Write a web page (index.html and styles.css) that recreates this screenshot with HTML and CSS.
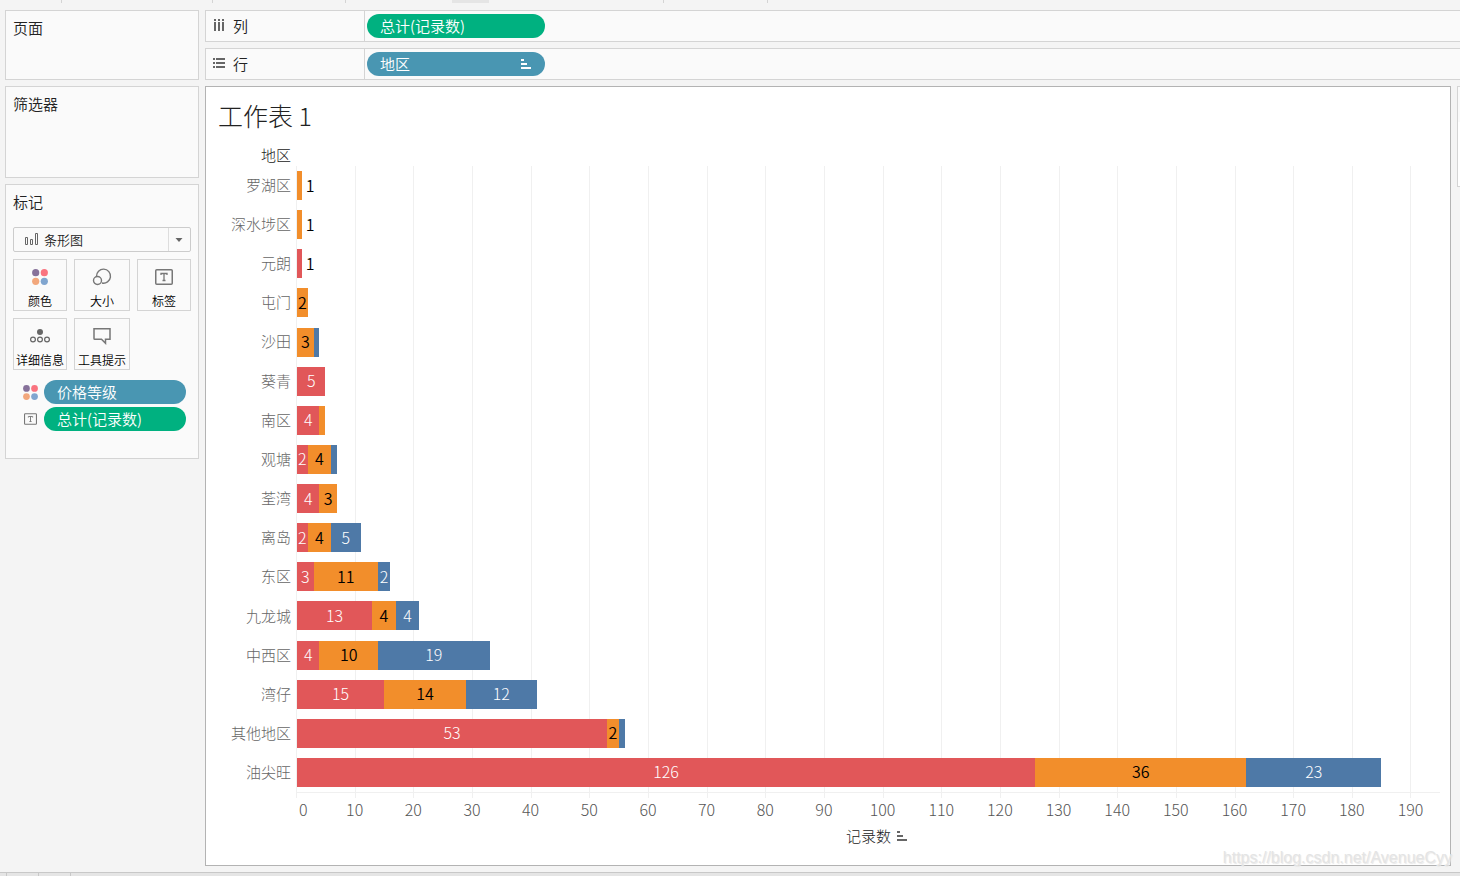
FILE: index.html
```html
<!DOCTYPE html>
<html lang="zh-CN">
<head>
<meta charset="utf-8">
<meta name="viewport" content="width=device-width, initial-scale=1">
<title>工作表 1</title>
<link rel="stylesheet" href="styles.css">
</head>
<body>
<svg class="defs" width="0" height="0" aria-hidden="true">
  <symbol id="sort" viewBox="0 0 10 10"><path d="M0 0h3v2H0zM0 4h6v2H0zM0 8h10v2H0z" fill="currentColor"/></symbol>
  <symbol id="dots" viewBox="0 0 16 16"><circle cx="3.700" cy="3.700" r="3.600" fill="#86719a"/><circle cx="12.300" cy="3.700" r="3.600" fill="#f9737f"/><circle cx="3.700" cy="12.300" r="3.600" fill="#f2a77c"/><circle cx="12.300" cy="12.300" r="3.600" fill="#80a5cf"/></symbol>
  <symbol id="text" viewBox="0 0 18 16"><rect x=".75" y=".75" width="16.500" height="14.500" rx="1" fill="none" stroke="#777" stroke-width="1.500"/><path d="M6 6V4.500h6V6M9 4.500v7M7.500 11.500h3" fill="none" stroke="#777" stroke-width="1.300"/></symbol>
</svg>
<div class="toolbar-edge"><i class="w1"></i><i class="w2"></i><i class="w3"></i><b></b><i class="w4"></i><i class="w5"></i></div>
<main class="workspace">
  <aside class="cards">
    <section class="card pages"><h2>页面</h2></section>
    <section class="card filters"><h2>筛选器</h2></section>
    <section class="card marks">
      <h2>标记</h2>
      <div class="mark-type">
        <select aria-label="标记类型"><option>条形图</option></select>
        <svg class="type-icon" width="14" height="13" viewBox="0 0 14 13" fill="none" stroke="#666"><path d="M.5 4.500h2v7h-2zM5.500 6.500h2v5h-2zM10.500 .5h2v11h-2z"/></svg>
        <svg class="arrow" width="22" height="23" viewBox="0 0 22 23"><path d="M.5 0v23" stroke="#ddd"/><path d="M7.500 10h7l-3.500 4z" fill="#666"/></svg>
      </div>
      <div class="mark-buttons">
        <button type="button"><svg width="16" height="18"><use href="#dots"/></svg>颜色</button>
        <button type="button"><svg width="20" height="18" viewBox="0 0 20 18" fill="none" stroke="#777" stroke-width="1.400"><path d="M4.500 8.500A7 7 0 1 1 10 15"/><circle cx="5.500" cy="12.500" r="4"/></svg>大小</button>
        <button type="button"><svg width="18" height="18"><use href="#text"/></svg>标签</button>
        <button type="button"><svg width="20" height="18" viewBox="0 0 20 18" fill="none" stroke="#666" stroke-width="1.200"><circle cx="10" cy="5" r="3" fill="#666" stroke="none"/><circle cx="3" cy="12.500" r="2.400"/><circle cx="10" cy="12.500" r="2.400"/><circle cx="17" cy="12.500" r="2.400"/></svg>详细信息</button>
        <button type="button"><svg width="20" height="18" viewBox="0 0 20 18" fill="none" stroke="#777" stroke-width="1.500"><path d="M2 1.750h16v10.500h-4.500v4l-4-4H2.750a.75 .75 0 0 1-.75-.75z"/></svg>工具提示</button>
      </div>
      <div class="encodings">
        <svg width="15" height="15"><use href="#dots"/></svg><button type="button" class="pill blue">价格等级</button>
        <svg width="13" height="12"><use href="#text"/></svg><button type="button" class="pill green">总计(记录数)</button>
      </div>
    </section>
  </aside>
  <div class="view">
    <section class="shelf">
      <h2><svg width="12" height="14" viewBox="0 0 12 14"><path d="M1 0h2v2H1zM5 0h2v2H5zM9 0h2v2H9zM1 3h2v9H1zM5 3h2v9H5zM9 3h2v9H9z" fill="#666"/></svg>列</h2>
      <button type="button" class="pill green">总计(记录数)</button>
    </section>
    <section class="shelf">
      <h2><svg width="12" height="14" viewBox="0 0 12 14"><path d="M0 1h2v2H0zM3 1h9v2H3zM0 5h2v2H0zM3 5h9v2H3zM0 9h2v2H0zM3 9h9v2H3z" fill="#666"/></svg>行</h2>
      <button type="button" class="pill blue">地区<svg width="10" height="10"><use href="#sort"/></svg></button>
    </section>
    <div class="stage">
      <section class="sheet">
        <h1>工作表 1</h1>
        <div class="chart">
          <div class="field">地区</div>
          <div class="names">
            <span>罗湖区</span><span>深水埗区</span><span>元朗</span><span>屯门</span><span>沙田</span><span>葵青</span><span>南区</span><span>观塘</span><span>荃湾</span><span>离岛</span><span>东区</span><span>九龙城</span><span>中西区</span><span>湾仔</span><span>其他地区</span><span>油尖旺</span>
          </div>
          <div class="gridlines"><i></i><i></i><i></i><i></i><i></i><i></i><i></i><i></i><i></i><i></i><i></i><i></i><i></i><i></i><i></i><i></i><i></i><i></i><i></i><i></i></div>
          <div class="bars">
            <div class="bar"><span class="mid" style="--v:1"></span><em>1</em></div>
            <div class="bar"><span class="mid" style="--v:1"></span><em>1</em></div>
            <div class="bar"><span class="low" style="--v:1"></span><em>1</em></div>
            <div class="bar"><span class="mid" style="--v:2">2</span></div>
            <div class="bar"><span class="mid" style="--v:3">3</span><span class="high" style="--v:1"></span></div>
            <div class="bar"><span class="low" style="--v:5">5</span></div>
            <div class="bar"><span class="low" style="--v:4">4</span><span class="mid" style="--v:1"></span></div>
            <div class="bar"><span class="low" style="--v:2">2</span><span class="mid" style="--v:4">4</span><span class="high" style="--v:1"></span></div>
            <div class="bar"><span class="low" style="--v:4">4</span><span class="mid" style="--v:3">3</span></div>
            <div class="bar"><span class="low" style="--v:2">2</span><span class="mid" style="--v:4">4</span><span class="high" style="--v:5">5</span></div>
            <div class="bar"><span class="low" style="--v:3">3</span><span class="mid" style="--v:11">11</span><span class="high" style="--v:2">2</span></div>
            <div class="bar"><span class="low" style="--v:13">13</span><span class="mid" style="--v:4">4</span><span class="high" style="--v:4">4</span></div>
            <div class="bar"><span class="low" style="--v:4">4</span><span class="mid" style="--v:10">10</span><span class="high" style="--v:19">19</span></div>
            <div class="bar"><span class="low" style="--v:15">15</span><span class="mid" style="--v:14">14</span><span class="high" style="--v:12">12</span></div>
            <div class="bar"><span class="low" style="--v:53">53</span><span class="mid" style="--v:2">2</span><span class="high" style="--v:1"></span></div>
            <div class="bar"><span class="low" style="--v:126">126</span><span class="mid" style="--v:36">36</span><span class="high" style="--v:23">23</span></div>
          </div>
          <div class="axis">
            <span>0</span><span>10</span><span>20</span><span>30</span><span>40</span><span>50</span><span>60</span><span>70</span><span>80</span><span>90</span><span>100</span><span>110</span><span>120</span><span>130</span><span>140</span><span>150</span><span>160</span><span>170</span><span>180</span><span>190</span>
          </div>
          <div class="axis-title">记录数<svg width="10" height="10"><use href="#sort"/></svg></div>
        </div>
        <div class="watermark">https://blog.csdn.net/AvenueCyy</div>
      </section>
      <aside class="legend"></aside>
    </div>
  </div>
</main>
<footer class="tabs-edge"><i></i><i></i><i></i></footer>
</body>
</html>
```
FILE: styles.css
```css
* { box-sizing: border-box; }

body {
  margin: 0;
  min-height: 100vh;
  display: flex;
  flex-direction: column;
  overflow-x: hidden;
  background: #f4f4f4;
  color: #222;
  font: 350 15px/24px "Noto Sans CJK SC", sans-serif;
}

h1, h2 { margin: 0; font-weight: 350; }
h2 { font-size: 15px; }
svg { display: block; flex: none; }
.defs { position: absolute; }
button { font: inherit; cursor: pointer; }

/* Edges of the toolbar above and the tab strip below */
.toolbar-edge { display: flex; height: 3px; }
.toolbar-edge i { border-right: 1px solid #d4d4d4; }
.toolbar-edge b { width: 37px; margin-left: 106px; background: #e5e5e5; }
.w1 { width: 62px; }
.w2 { width: 151px; }
.w3 { width: 133px; }
.w4 { width: 175px; }
.w5 { width: 104px; }
.tabs-edge {
  display: flex;
  height: 4px;
  padding-left: 6px;
  gap: 31px;
  background: #e5e5e5;
  border-top: 1px solid #c8c8c8;
}
.tabs-edge i { width: 1px; background: #c8c8c8; }

.workspace {
  flex: 1;
  display: grid;
  grid-template-columns: 194px minmax(0, 1fr);
  gap: 6px;
  padding: 7px 0 6px 5px;
}

/* Cards */
.cards { display: flex; flex-direction: column; gap: 6px; }
.card {
  padding: 5px 7px;
  background: #fafafa;
  border: 1px solid #d4d4d4;
}
.pages { min-height: 70px; }
.filters { min-height: 92px; }
.marks { padding-bottom: 27px; }

.mark-type {
  display: grid;
  grid-template-columns: 10px auto 1fr auto;
  align-items: center;
  height: 25px;
  margin-top: 13px;
  border: 1px solid #ccc;
  border-radius: 2px;
}
.mark-type select {
  grid-area: 1 / 1 / 2 / 5;
  width: 100%;
  height: 23px;
  padding: 0 30px;
  appearance: none;
  background: none;
  border: 0;
  color: #222;
  font: 350 13px/23px "Noto Sans CJK SC", sans-serif;
}
.type-icon { grid-area: 1 / 2; margin-left: 1px; pointer-events: none; }
.arrow { grid-area: 1 / 4; pointer-events: none; }

.mark-buttons {
  display: grid;
  grid-template-columns: 54fr 56fr 54fr;
  gap: 7px;
  margin-top: 7px;
}
.mark-buttons button {
  display: flex;
  flex-direction: column;
  align-items: center;
  gap: 5px;
  height: 52px;
  padding: 8px 0 0;
  background: #fafafa;
  border: 1px solid #d4d4d4;
  color: #000;
  font-size: 12px;
  line-height: 20px;
  white-space: nowrap;
}

.encodings {
  display: grid;
  grid-template-columns: 31px 142px;
  align-items: center;
  gap: 3px 0;
  margin-top: 10px;
}
.encodings svg { justify-self: center; margin-left: 4px; }
.encodings .pill { width: 100%; }

.pill {
  display: flex;
  align-items: center;
  justify-content: space-between;
  width: 178px;
  height: 24px;
  padding: 0 14px 0 13px;
  border: 0;
  border-radius: 12px;
  color: #fff;
  text-align: left;
}
.green { background: #00b180; }
.blue { background: #4996b2; }

/* Shelves */
.view { display: flex; flex-direction: column; gap: 6px; }
.shelf {
  display: flex;
  align-items: center;
  gap: 2px;
  height: 32px;
  background: #fafafa;
  border: 1px solid #d4d4d4;
  border-right: 0;
}
.shelf h2 {
  display: flex;
  align-items: center;
  gap: 8px;
  width: 159px;
  height: 30px;
  padding-left: 7px;
  border-right: 1px solid #d4d4d4;
}

.stage { flex: 1; display: flex; gap: 6px; }
.legend {
  width: 3px;
  height: 101px;
  border: solid #d4d4d4;
  border-width: 1px 0 1px 1px;
  background: linear-gradient(#fafafa 35px, #fff 35px);
}

/* Worksheet */
.sheet {
  position: relative;
  flex: 1;
  display: flex;
  flex-direction: column;
  padding: 12px 10px 17px 12px;
  background: #fff;
  border: 1px solid #b3b3b3;
}
h1 { font-size: 25px; line-height: 32px; font-weight: 300; }

.chart {
  flex: 1;
  display: grid;
  grid-template-columns: 78px minmax(0, 1fr);
  grid-template-rows: 22px 1fr auto auto;
  margin-top: 13px;
  font-weight: 300;
}
.field { grid-area: 1 / 1; padding-right: 5px; line-height: 22px; text-align: right; }
.names { grid-area: 2 / 1; display: grid; grid-auto-rows: 1fr; padding-right: 5px; color: #666; }
.names span { display: flex; align-items: center; justify-content: flex-end; padding-bottom: 2px; }

.gridlines {
  grid-area: 2 / 2;
  display: flex;
  margin-bottom: -5px;
}
.gridlines i { width: calc(10 / 195 * 100%); border-left: 1px solid #f0f0f0; }
.gridlines i:last-child { width: calc(5 / 195 * 100%); }

.bars {
  grid-area: 2 / 2;
  display: grid;
  grid-auto-rows: 1fr;
  border-bottom: 1px solid #f0f0f0;
  color: #fff;
  font-size: 16px;
}
.bar { display: flex; align-items: center; min-width: 0; }
.bar span {
  display: flex;
  align-items: center;
  justify-content: center;
  width: calc(var(--v) / 195 * 100%);
  height: 29px;
  padding-bottom: 2px;
}
.bar span:first-child { border-left: 1px solid #f0f0f0; }
.bar em { margin-left: 4px; padding-bottom: 2px; color: #000; font-style: normal; font-weight: 350; }
.low { background: #e15759; }
.mid { background: #f28e2b; color: #000; font-weight: 350; }
.high { background: #4e79a7; }

.axis {
  grid-area: 3 / 2;
  display: flex;
  padding-top: 5px;
  color: #555;
  font-size: 16px;
  line-height: 22px;
}
.axis span { width: calc(10 / 195 * 100%); text-align: center; }
.axis span:first-child { width: calc(5 / 195 * 100%); padding-left: 3px; text-align: left; }
.axis-title {
  grid-area: 4 / 2;
  display: flex;
  align-items: center;
  justify-content: center;
  gap: 6px;
  margin-top: 4px;
  padding-left: 17px;
}
.axis-title svg { color: #666; }

.watermark {
  position: absolute;
  right: -2px;
  bottom: -3px;
  color: #e4e4e4;
  font: 16px/20px "Liberation Sans", sans-serif;
  text-shadow: 1px 1px 1px #e8e8e8;
}
```
